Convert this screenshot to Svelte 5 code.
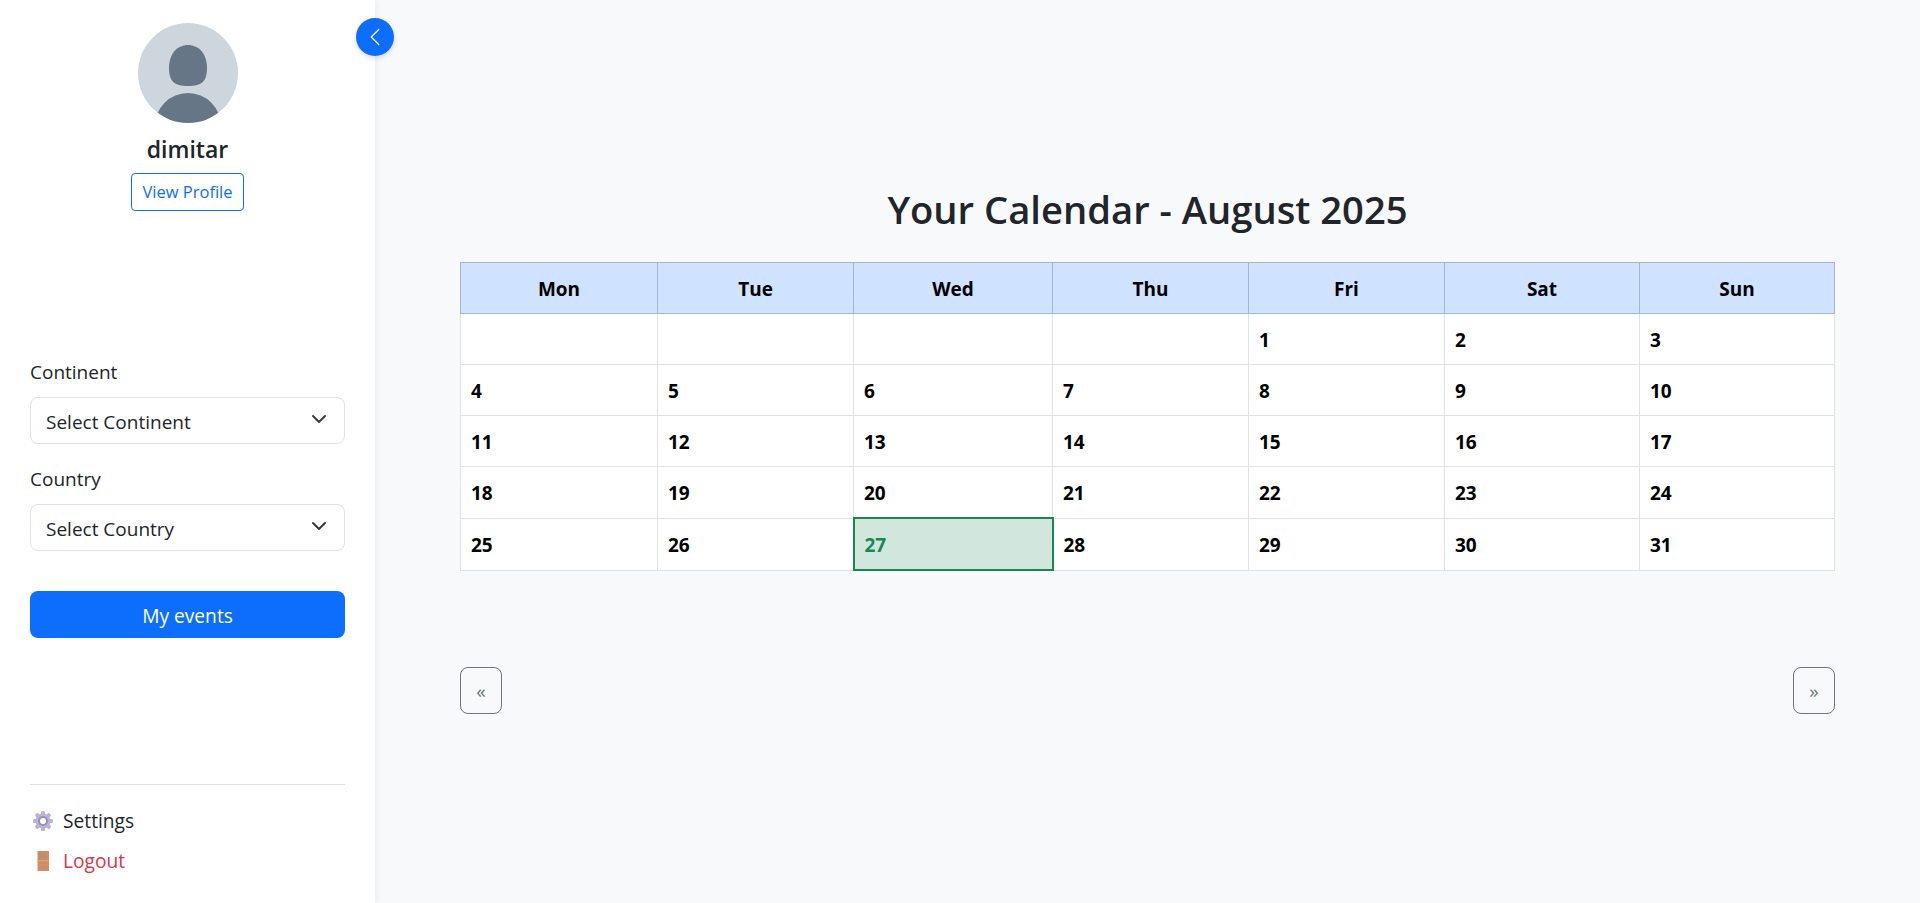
<script>
  const days = ['Mon', 'Tue', 'Wed', 'Thu', 'Fri', 'Sat', 'Sun'];
  const weeks = [
    ['', '', '', '', 1, 2, 3],
    [4, 5, 6, 7, 8, 9, 10],
    [11, 12, 13, 14, 15, 16, 17],
    [18, 19, 20, 21, 22, 23, 24],
    [25, 26, 27, 28, 29, 30, 31]
  ];
  const teeth = [0, 45, 90, 135, 180, 225, 270, 315];
</script>

<div class="layout">
  <aside class="sidebar">
    <button class="toggle" aria-label="Collapse sidebar">
      <svg width="20" height="20" viewBox="0 0 16 16" fill="#fff"><path fill-rule="evenodd" d="M11.354 1.646a.5.5 0 0 1 0 .708L5.707 8l5.647 5.646a.5.5 0 0 1-.708.708l-6-6a.5.5 0 0 1 0-.708l6-6a.5.5 0 0 1 .708 0z"/></svg>
    </button>

    <div class="profile">
      <svg class="avatar" viewBox="0 0 100 100">
        <defs><clipPath id="av"><circle cx="50" cy="50" r="50"/></clipPath></defs>
        <circle cx="50" cy="50" r="50" fill="#ced6dd"/>
        <g clip-path="url(#av)" fill="#667686">
          <path d="M50 22c-11 0-19 9-19 23 0 13 5 18 19 18s19-5 19-18c0-14-8-23-19-23z"/>
          <circle cx="50" cy="103" r="33"/>
        </g>
      </svg>
      <div class="name">dimitar</div>
      <a class="view" href="#profile">View Profile</a>
    </div>

    <div class="filters">
      <label for="continent">Continent</label>
      <div class="select-wrap">
        <select id="continent"><option>Select Continent</option></select>
        <svg class="chev" viewBox="0 0 16 16"><path fill="none" stroke="#343a40" stroke-linecap="round" stroke-linejoin="round" stroke-width="2" d="m2 5 6 6 6-6"/></svg>
      </div>
      <label for="country" class="second">Country</label>
      <div class="select-wrap">
        <select id="country"><option>Select Country</option></select>
        <svg class="chev" viewBox="0 0 16 16"><path fill="none" stroke="#343a40" stroke-linecap="round" stroke-linejoin="round" stroke-width="2" d="m2 5 6 6 6-6"/></svg>
      </div>
      <button class="events">My events</button>
    </div>

    <div class="bottom">
      <a class="link" href="#settings">
        <svg class="ico" viewBox="0 0 20 20">
          {#each teeth as t}
            <rect x="8" y="0" width="4" height="5" rx="1.500" fill="#bdb2d8" transform="rotate({t} 10 10)"/>
          {/each}
          <circle cx="10" cy="10" r="7.500" fill="#bdb2d8"/>
          <circle cx="10" cy="10" r="5" fill="#9a8fb8"/>
          <circle cx="10" cy="10" r="3" fill="#fff"/>
        </svg>
        <span>Settings</span>
      </a>
      <a class="link logout" href="#logout">
        <svg class="ico" viewBox="0 0 20 20">
          <rect x="4.500" y="0" width="11.500" height="20" fill="#d98d5f"/>
          <rect x="6" y="1.500" width="8" height="7.500" fill="#bd8e72"/>
          <rect x="6" y="10.500" width="8" height="2.500" fill="#c48f6f"/>
          <rect x="6" y="15" width="8" height="3.500" fill="#c48f6f"/>
          <rect x="4.500" y="9.200" width="11.500" height="1" fill="#f2a366"/>
        </svg>
        <span>Logout</span>
      </a>
    </div>
  </aside>

  <main class="main">
    <h2>Your Calendar - August 2025</h2>
    <table>
      <thead>
        <tr>{#each days as d}<th>{d}</th>{/each}</tr>
      </thead>
      <tbody>
        {#each weeks as w}
          <tr>
            {#each w as n}
              <td class:today={n === 27}>{n}</td>
            {/each}
          </tr>
        {/each}
      </tbody>
    </table>
    <div class="nav">
      <button class="arrow prev">«</button>
      <button class="arrow next">»</button>
    </div>
  </main>
</div>

<style>
  :global(body) {
    margin: 0;
    background: #f8f9fa;
    color: #212529;
    font-family: "Open Sans", "Noto Sans", sans-serif;
    font-size: 16px;
  }
  .layout {
    display: flex;
    height: 903px;
    overflow: hidden;
  }
  .sidebar {
    position: relative;
    box-sizing: border-box;
    width: 375px;
    flex: none;
    background: #fff;
    padding: 23px 30px 0;
    display: flex;
    flex-direction: column;
    box-shadow: 2px 0 5px rgba(0, 0, 0, 0.05);
  }
  .toggle {
    position: absolute;
    top: 18px;
    right: -19px;
    width: 38px;
    height: 38px;
    border-radius: 50%;
    border: 0;
    padding: 0;
    background: #0d6efd;
    display: flex;
    align-items: center;
    justify-content: center;
    box-shadow: 0 2px 5px rgba(0, 0, 0, 0.15);
  }
  .profile {
    display: flex;
    flex-direction: column;
    align-items: center;
  }
  .avatar {
    width: 100px;
    height: 100px;
    display: block;
  }
  .name {
    font-size: 23px;
    font-weight: 600;
    line-height: 36px;
    margin-top: 8px;
  }
  .view {
    box-sizing: border-box;
    margin-top: 6px;
    height: 38px;
    width: 113px;
    display: flex;
    align-items: center;
    justify-content: center;
    border: 1px solid #0d6efd;
    border-radius: 4px;
    color: #0d6efd;
    text-decoration: none;
    font-size: 16.500px;
    padding-bottom: 1px;
  }
  .filters {
    margin-top: 148px;
    display: flex;
    flex-direction: column;
  }
  label {
    font-size: 19px;
    line-height: 26px;
    margin-bottom: 12px;
  }
  .second {
    margin-top: 22px;
  }
  .select-wrap {
    position: relative;
  }
  select {
    appearance: none;
    box-sizing: border-box;
    width: 100%;
    height: 47px;
    padding: 2px 15px 0;
    border: 1px solid #dee2e6;
    border-radius: 8px;
    background: #fff;
    color: #212529;
    font: inherit;
    font-size: 19px;
  }
  .chev {
    position: absolute;
    right: 18px;
    top: 14px;
    width: 16px;
    height: 16px;
    pointer-events: none;
  }
  .events {
    margin-top: 40px;
    height: 47px;
    border: 0;
    border-radius: 8px;
    background: #0d6efd;
    color: #fff;
    font: inherit;
    font-size: 19.200px;
    padding: 2px 0 0;
  }
  .bottom {
    margin-top: auto;
    margin-bottom: 29px;
    border-top: 1px solid #dee2e6;
    padding-top: 22px;
    display: flex;
    flex-direction: column;
    gap: 13px;
  }
  .link {
    display: flex;
    align-items: center;
    gap: 10px;
    color: #212529;
    text-decoration: none;
    font-size: 19.200px;
    line-height: 27px;
    padding-left: 3px;
  }
  .logout {
    color: #dc3545;
  }
  .ico {
    width: 20px;
    height: 20px;
    flex: none;
  }
  .main {
    flex: 1;
    min-width: 0;
    padding: 181px 85px 0;
  }
  h2 {
    margin: 0 0 25px;
    text-align: center;
    font-size: 38.200px;
    line-height: 56px;
    font-weight: 600;
  }
  table {
    width: 1375px;
    table-layout: fixed;
    border-collapse: collapse;
    background: #fff;
    color: #000;
    font-size: 19px;
    line-height: 26px;
  }
  th, td {
    border: 1px solid #dee2e6;
    font-weight: 700;
    box-sizing: border-box;
  }
  th {
    padding: 13px 12px 11px;
    background: #cfe2ff;
    border-color: #a6b5cc;
    text-align: center;
  }
  th:nth-child(1) { width: 197px; }
  th:nth-child(2) { width: 196px; }
  th:nth-child(3) { width: 199px; }
  th:nth-child(4) { width: 196px; }
  th:nth-child(5) { width: 196px; }
  th:nth-child(6) { width: 195px; }
  td {
    text-align: left;
    padding: 13px 10px 11px;
    height: 51px;
  }
  td.today {
    background: #d1e7dd;
    color: #198754;
    border: 2px solid #198754;
  }
  .nav {
    margin-top: 96px;
    display: flex;
    justify-content: space-between;
  }
  .arrow {
    box-sizing: border-box;
    width: 42px;
    height: 47px;
    border: 1px solid #6c757d;
    border-radius: 8px;
    background: transparent;
    color: #6c757d;
    font: inherit;
    font-size: 19px;
    padding: 0;
  }
</style>
